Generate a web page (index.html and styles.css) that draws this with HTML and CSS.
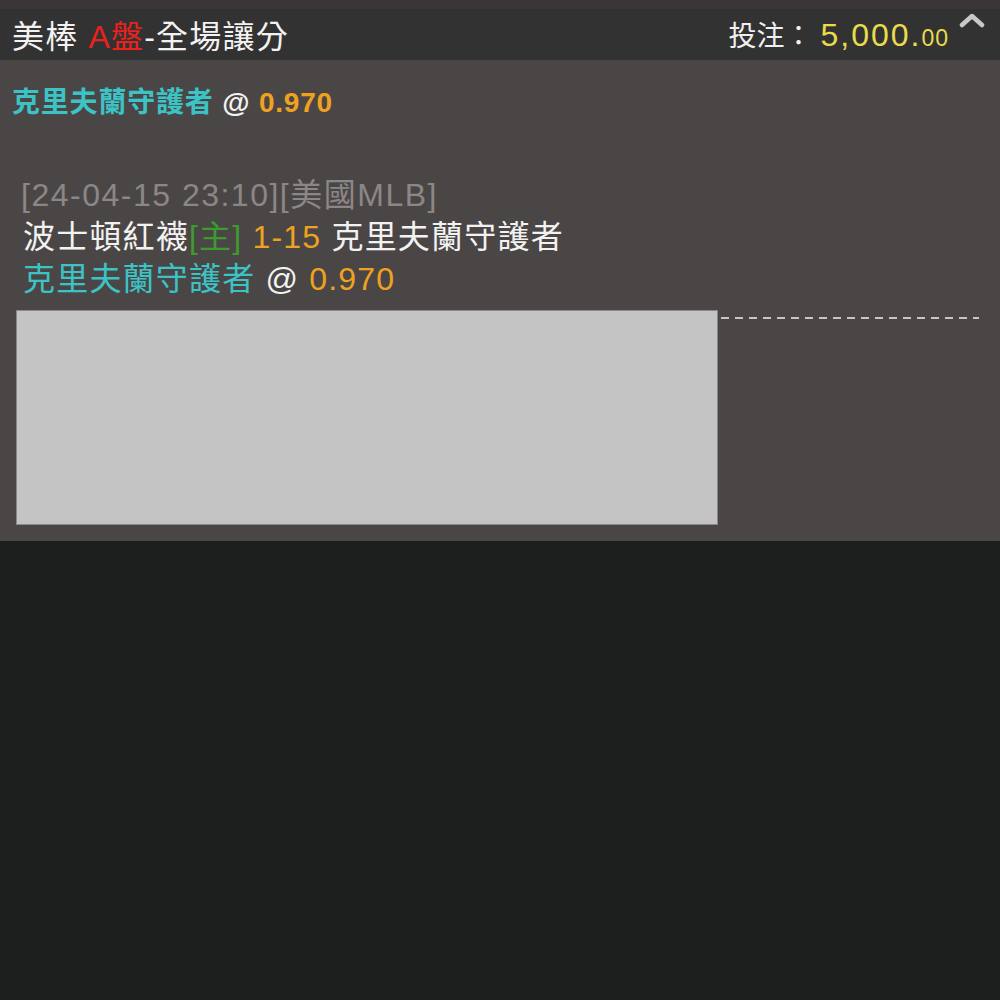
FILE: index.html
```html
<!DOCTYPE html>
<html lang="zh-Hant">
<head>
    <meta charset="UTF-8">
    <title>投注明細</title>
    <link rel="stylesheet" href="styles.css">
</head>
<body>
    <div class="top-strip"></div>

    <div class="bet-header">
        <div class="bet-title">美棒 <span class="red">A盤</span>-全場讓分</div>
        <div class="bet-stake">
            投注：<span class="amount">5,000.<small>00</small></span>
        </div>
        <svg class="chevron" width="26" height="16" viewBox="0 0 26 16">
            <polyline points="3,13 13,4 23,13" fill="none" stroke="#c9c7c7" stroke-width="4.5" stroke-linejoin="round" stroke-linecap="round"/>
        </svg>
    </div>

    <div class="bet-panel">
        <div class="pick">
            <span class="cyan">克里夫蘭守護者</span> <span class="white">@</span> <span class="orange">0.970</span>
        </div>

        <div class="detail">
            <div class="meta">[24-04-15 23:10][美國MLB]</div>
            <div class="match">波士頓紅襪<span class="green">[主]</span> <span class="orange">1-15</span> 克里夫蘭守護者</div>
            <div class="line"><span class="cyan">克里夫蘭守護者</span> @ <span class="orange">0.970</span></div>
        </div>

        <div class="receipt-row">
            <div class="receipt-box"></div>
            <div class="dash"></div>
        </div>
    </div>
</body>
</html>
```

FILE: styles.css
```css
body {
    margin: 0;
    background-color: #1d1f1e;
    font-family: "Liberation Sans", "Noto Sans CJK TC", sans-serif;
    color: #f2f2f2;
}
.top-strip {
    height: 9px;
    background-color: #3a3636;
}
.bet-header {
    display: flex;
    align-items: center;
    height: 51px;
    padding: 0 15px 2px 12px;
    box-sizing: border-box;
    background-color: #333232;
}
.bet-title {
    font-size: 32px;
    letter-spacing: 1.2px;
    flex: 1;
}
.red {
    color: #e8221c;
}
.bet-stake {
    font-size: 28px;
    color: #f0f0f0;
}
.amount {
    color: #e8dc4c;
    font-size: 32px;
    letter-spacing: 2px;
    margin-left: 8px;
}
.amount small {
    font-size: 23px;
    letter-spacing: 1px;
}
.chevron {
    align-self: flex-start;
    margin-top: 3px;
    margin-left: 10px;
}
.bet-panel {
    background-color: #4b4646;
    padding: 20px 0 16px 12px;
}
.pick {
    font-size: 28px;
    font-weight: bold;
    letter-spacing: 0.8px;
}
.cyan {
    color: #3cc3c6;
}
.orange {
    color: #efa21f;
}
.green {
    color: #3c9a2e;
}
.white {
    color: #f2f2f2;
}
.detail {
    margin-top: 54px;
    padding-left: 11px;
    font-size: 32px;
    line-height: 42px;
    letter-spacing: 1.2px;
}
.meta {
    color: #8c8787;
    margin-left: -2px;
    letter-spacing: 1.5px;
}
.receipt-row {
    display: flex;
    margin-top: 10px;
}
.receipt-box {
    width: 700px;
    height: 213px;
    margin-left: 4px;
    background-color: #c4c4c4;
    border: 1px solid #8a8888;
}
.dash {
    width: 258px;
    height: 2px;
    margin: 7px 0 0 3px;
    background: repeating-linear-gradient(to right, #c9c5c5 0 8px, transparent 8px 14px);
}
```
